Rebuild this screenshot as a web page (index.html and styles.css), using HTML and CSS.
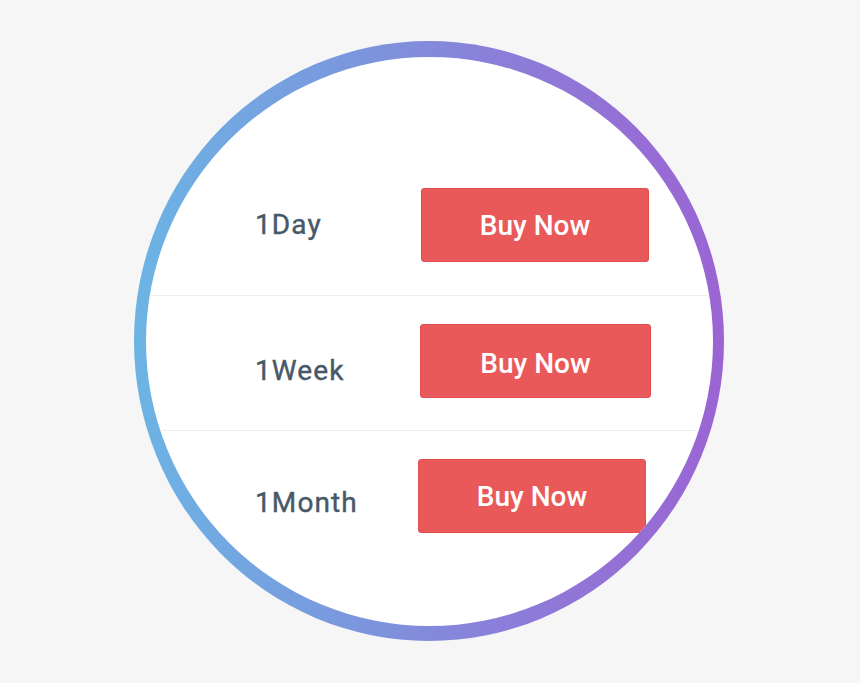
FILE: index.html
```html
<!DOCTYPE html>
<html lang="en">
<head>
<meta charset="utf-8">
<title>Pricing</title>
<link rel="stylesheet" href="styles.css">
</head>
<body>
<div class="page">
  <div class="ring">
    <div class="disc">
      <div class="row row-day">
        <span class="label">1Day</span>
        <button class="buy">Buy Now</button>
      </div>
      <div class="row row-week">
        <span class="label">1Week</span>
        <button class="buy">Buy Now</button>
      </div>
      <div class="row row-month">
        <span class="label">1Month</span>
        <button class="buy">Buy Now</button>
      </div>
    </div>
  </div>
</div>
</body>
</html>
```

FILE: styles.css
```css
html, body {
  margin: 0;
  padding: 0;
  background: #f6f6f6;
}
.page {
  width: 860px;
  height: 683px;
  box-sizing: border-box;
  padding: 41px 0 0 134px;
}
.ring {
  width: 590px;
  height: 600px;
  box-sizing: border-box;
  padding: 16px 11px 15px 12px;
  border-radius: 50%;
  background: linear-gradient(90deg, #6cb4e4 0%, #7c94dd 40%, #8a80d9 60%, #9b64d3 100%);
}
.disc {
  width: 567px;
  height: 569px;
  border-radius: 50%;
  background: #ffffff;
  overflow: hidden;
  display: flex;
  flex-direction: column;
}
.row {
  display: flex;
  align-items: flex-start;
  padding-left: 109px;
  border-bottom: 1px solid #efefef;
}
.row-day { padding-top: 131px; padding-bottom: 33px; }
.row-week { padding-top: 28px; padding-bottom: 32px; }
.row-month { padding-top: 28px; border-bottom: none; }
.label {
  width: 166px;
  font-family: Roboto, "Liberation Sans", sans-serif;
  font-weight: 400;
  font-size: 28px;
  line-height: 33px;
  color: #475868;
  letter-spacing: 1.1px;
  -webkit-text-stroke: 0.4px #475868;
}
.row-day .label { margin-top: 20px; }
.row-week .label { margin-top: 30px; }
.row-month .label { margin-top: 27px; }
.row-week .buy { margin-left: -1px; width: 231px; padding-top: 5px; }
.row-month .buy { margin-left: -3px; }
.buy {
  width: 228px;
  height: 74px;
  padding: 0;
  border: 1px solid #e24f50;
  border-radius: 3px;
  background: #e9595a;
  color: #ffffff;
  font-family: Roboto, "Liberation Sans", sans-serif;
  font-weight: 500;
  font-size: 28px;
  line-height: 33px;
  cursor: pointer;
}
```
